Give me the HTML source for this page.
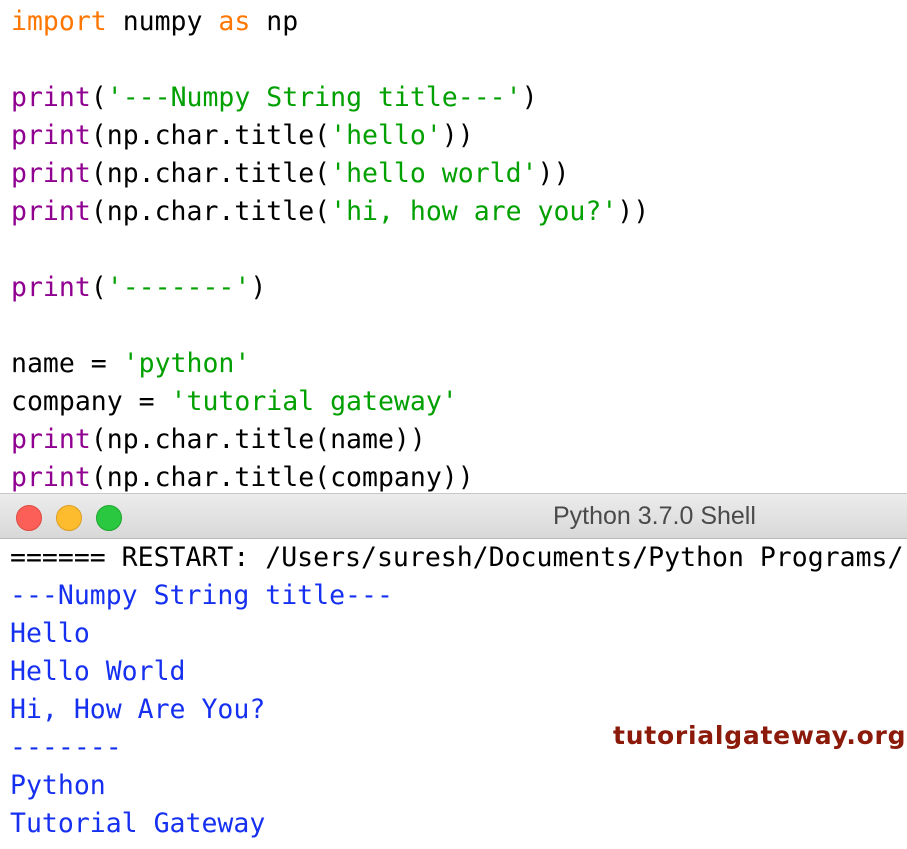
<!DOCTYPE html>
<html><head><style>
html,body{margin:0;padding:0;background:#fff;width:907px;height:849px;overflow:hidden;position:relative}
pre{margin:0;font-family:"DejaVu Sans Mono","Liberation Mono",monospace;font-size:26.5px;line-height:38px;white-space:pre;position:absolute;left:11px}
#code{top:3px;color:#000}
.k{color:#ff7700}.p{color:#900090}.s{color:#00a000}
#bar{position:absolute;left:0;top:493px;width:907px;height:44px;background:linear-gradient(#ececec,#d8d8d8);border-top:1px solid #c8c8c8;border-bottom:1px solid #b8b8b8}
.d{position:absolute;top:11px;width:24px;height:24px;border-radius:50%}
#title{position:absolute;left:553px;top:8px;font-family:"Liberation Sans",sans-serif;font-size:25px;color:#4a4a4a}
#shell{top:539px;left:10px;color:#1530f0}
#shell .b{color:#000}
#wm{position:absolute;left:613px;top:721px;font-family:"DejaVu Sans","Liberation Sans",sans-serif;font-weight:bold;font-size:25px;color:#8b1a0a;letter-spacing:0.75px}
</style></head><body>
<pre id="code"><span class="k">import</span> numpy <span class="k">as</span> np

<span class="p">print</span>(<span class="s">'---Numpy String title---'</span>)
<span class="p">print</span>(np.char.title(<span class="s">'hello'</span>))
<span class="p">print</span>(np.char.title(<span class="s">'hello world'</span>))
<span class="p">print</span>(np.char.title(<span class="s">'hi, how are you?'</span>))

<span class="p">print</span>(<span class="s">'-------'</span>)

name = <span class="s">'python'</span>
company = <span class="s">'tutorial gateway'</span>
<span class="p">print</span>(np.char.title(name))
<span class="p">print</span>(np.char.title(company))</pre>
<div id="bar">
<div class="d" style="left:16px;background:#fc5f57;border:0.5px solid #de4a42"></div>
<div class="d" style="left:56px;background:#fdbc2e;border:0.5px solid #dd9e20"></div>
<div class="d" style="left:96px;background:#29c840;border:0.5px solid #1fa630"></div>
<div id="title">Python 3.7.0 Shell</div>
</div>
<pre id="shell"><span class="b">====== RESTART: /Users/suresh/Documents/Python Programs/</span>
---Numpy String title---
Hello
Hello World
Hi, How Are You?
-------
Python
Tutorial Gateway</pre>
<div id="wm">tutorialgateway.org</div>
</body></html>
